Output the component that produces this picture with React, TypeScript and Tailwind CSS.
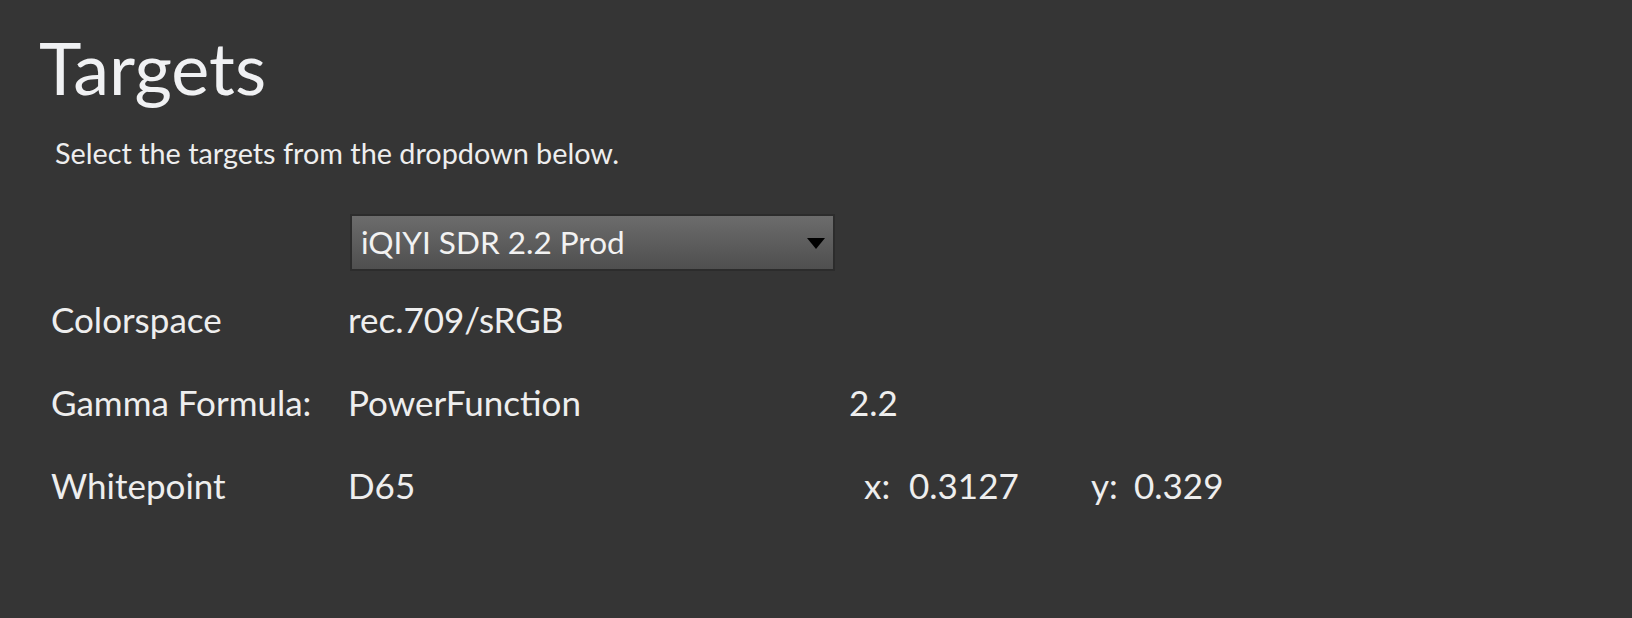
import React from 'react';

const Row: React.FC<{ label: string; value: string; children?: React.ReactNode }> = ({
  label,
  value,
  children,
}) => (
  <div className="grid h-[83px] grid-cols-[299px_498px_1fr] items-start leading-[83px]">
    <div className="pl-[11px]">{label}</div>
    <div className="pl-[9px]">{value}</div>
    <div className="flex">{children}</div>
  </div>
);

const App: React.FC = () => {
  return (
    <div className="h-[618px] w-full overflow-hidden bg-[#353535] pl-[40px] pt-[27px] font-['Lato',sans-serif] text-[#eeeeee]">
      <h1 className="-ml-[1px] text-[72px] leading-[80px] text-[#f0f1f3]">Targets</h1>
      <p className="ml-[15px] mt-[28px] text-[28.8px] leading-[36px]">
        Select the targets from the dropdown below.
      </p>

      <div className="ml-[310px] mt-[43px] flex h-[57px] w-[485px] items-center justify-between border-2 border-[#2c2c2c] bg-gradient-to-b from-[#6c6c6c] to-[#4f4f4f] pl-[9px] pr-[8px]">
        <span className="text-[31.5px] leading-none text-[#f2f2f2]">iQIYI SDR 2.2 Prod</span>
        <svg width="18" height="11" viewBox="0 0 18 11" className="mt-[2px]">
          <path d="M0 0 H18 L9 11 Z" fill="#000000" />
        </svg>
      </div>

      <div className="mt-[7px] text-[35px]">
        <Row label="Colorspace" value="rec.709/sRGB" />
        <Row label="Gamma Formula:" value="PowerFunction">
          <span className="pl-[12px]">2.2</span>
        </Row>
        <Row label="Whitepoint" value="D65">
          <div className="flex pl-[27px]">
            <span className="w-[45px]">x:</span>
            <span className="w-[182px]">0.3127</span>
            <span className="w-[43px]">y:</span>
            <span>0.329</span>
          </div>
        </Row>
      </div>
    </div>
  );
};

export default App;
